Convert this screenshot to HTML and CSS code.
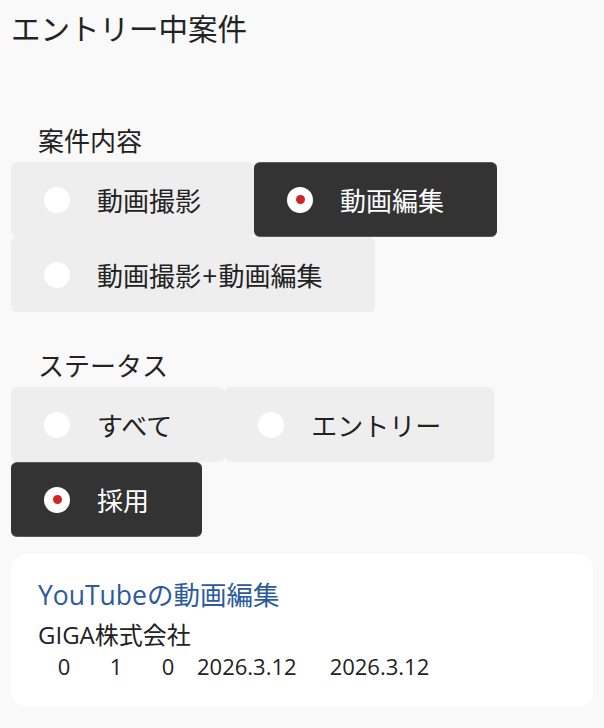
FILE: index.html
```html
<!DOCTYPE html>
<html lang="ja">
<head>
<meta charset="utf-8">
<link rel="stylesheet" href="styles.css">
</head>
<body>
<div class="page">
  <h1 class="page-title">エントリー中案件</h1>

  <section class="filter filter-content">
    <div class="filter-label">案件内容</div>
    <div class="options">
      <div class="option"><span class="radio"></span><span class="option-text">動画撮影</span></div>
      <div class="option selected"><span class="radio"></span><span class="option-text">動画編集</span></div>
      <div class="option"><span class="radio"></span><span class="option-text">動画撮影<span class="plus">+</span>動画編集</span></div>
    </div>
  </section>

  <section class="filter filter-status">
    <div class="filter-label">ステータス</div>
    <div class="options">
      <div class="option"><span class="radio"></span><span class="option-text">すべて</span></div>
      <div class="option"><span class="radio"></span><span class="option-text">エントリー</span></div>
      <div class="option selected"><span class="radio"></span><span class="option-text">採用</span></div>
    </div>
  </section>

  <div class="card">
    <div class="card-title">YouTubeの動画編集</div>
    <div class="card-company">GIGA株式会社</div>
    <div class="card-meta">
      <span class="count">0</span>
      <span class="count">1</span>
      <span class="count">0</span>
      <span class="date">2026.3.12</span>
      <span class="date date-second">2026.3.12</span>
    </div>
  </div>
</div>
</body>
</html>
```

FILE: styles.css
```css
html, body {
  margin: 0;
  padding: 0;
  background: #f9f9f9;
}
body {
  font-family: "Noto Sans CJK JP", "Noto Sans", sans-serif;
  color: #222;
}
.page {
  padding: 0 11px;
}
.page-title {
  margin: 0;
  padding-top: 10px;
  font-size: 29.5px;
  font-weight: 400;
  line-height: 35px;
  color: #222;
}
.filter-content {
  margin-top: 79px;
}
.filter-status {
  margin-top: 37px;
}
.filter-label {
  padding-left: 27px;
  font-size: 26px;
  line-height: 31px;
  color: #222;
}
.options {
  margin-top: 7px;
  display: flex;
  flex-wrap: wrap;
}
.option {
  height: 75px;
  box-sizing: border-box;
  display: flex;
  align-items: center;
  padding-left: 33px;
  padding-right: 53px;
  background: #eeeeee;
  border-radius: 6px;
  font-size: 26px;
  color: #222;
}
.option.selected {
  background: #333333;
  color: #fff;
  border-top: 1px solid #5a5a5a;
  border-bottom: 1px solid #5a5a5a;
}
.radio {
  width: 26px;
  height: 26px;
  border-radius: 50%;
  background: #fff;
  margin-right: 27px;
  display: flex;
  align-items: center;
  justify-content: center;
  flex: none;
}
.selected .radio::after {
  content: "";
  width: 9px;
  height: 9px;
  border-radius: 50%;
  background: #d32424;
}
.option-text {
  line-height: 1;
}
.plus {
  padding: 0 1.5px;
}
.card {
  margin-top: 17px;
  background: #fff;
  border-radius: 16px;
  padding: 25px 27px 27px;
  font-family: "Open Sans", "Noto Sans CJK JP", sans-serif;
}
.card-title {
  font-size: 26.5px;
  line-height: 32px;
  color: #2c5aa0;
}
.card-company {
  margin-top: 10px;
  font-size: 24px;
  line-height: 28px;
  color: #222;
}
.card-meta {
  margin-top: 4px;
  display: flex;
  align-items: center;
  font-size: 22px;
  line-height: 27px;
  color: #222;
}
.count {
  width: 52px;
  text-align: center;
}
.date {
  margin-left: 3px;
}
.date-second {
  margin-left: 33px;
}
```
